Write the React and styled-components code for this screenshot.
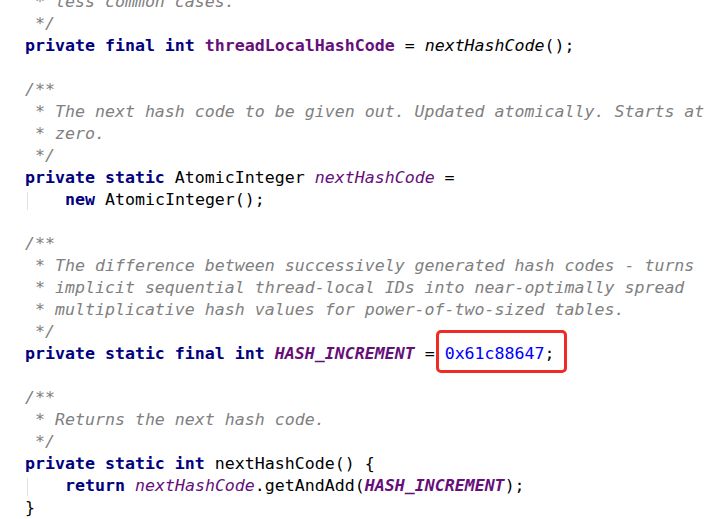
import styled, { createGlobalStyle } from 'styled-components';


const Global = createGlobalStyle`
        html, body {
            margin: 0;
            background: #ffffff;
        }
    `

const Editor = styled.div`
        margin-top: -9px;
        padding-left: 25px;
        font-family: "DejaVu Sans Mono", "Liberation Mono", monospace;
        font-size: 16.6px;
        color: #000000;
        overflow: hidden;
        height: 528px;
    `

const Line = styled.div`
        height: 22px;
        line-height: 22px;
        white-space: pre;
    `

const Guide = styled.span`
        display: inline-block;
        width: 40px;
        height: 18px;
        vertical-align: middle;
        box-sizing: border-box;
        border-left: 1px solid #e3e3e3;
        margin-left: 2px;
        margin-right: -2px;
    `

const Kw = styled.span`
        color: #000080;
        font-weight: bold;
    `

const Field = styled.span`
        color: #660e7a;
        font-weight: ${p => (p.$bold ? 'bold' : 'normal')};
        font-style: ${p => (p.$italic ? 'italic' : 'normal')};
    `

const Call = styled.span`
        font-style: ${p => (p.$italic ? 'italic' : 'normal')};
    `

const Comment = styled.span`
        color: #808080;
        font-style: italic;
    `

const Num = styled.span`
        color: #0000ff;
    `

const Marked = styled.span`
        position: relative;
        &::after {
            content: "";
            position: absolute;
            left: -9px;
            right: -12px;
            top: -14px;
            bottom: -10px;
            border: 3px solid #f02a24;
            border-radius: 5px;
        }
    `

export default function App() {
    return (
        <>
            <Global />
            <Editor>
                <Line><Comment> * less common cases.</Comment></Line>
                <Line><Comment> */</Comment></Line>
                <Line>
                    <Kw>private final int</Kw> <Field $bold>threadLocalHashCode</Field> = <Call $italic>nextHashCode</Call>();
                </Line>
                <Line />
                <Line><Comment>/**</Comment></Line>
                <Line><Comment> * The next hash code to be given out. Updated atomically. Starts at</Comment></Line>
                <Line><Comment> * zero.</Comment></Line>
                <Line><Comment> */</Comment></Line>
                <Line>
                    <Kw>private static</Kw> AtomicInteger <Field $italic>nextHashCode</Field> =
                </Line>
                <Line>
                    <Guide /><Kw>new</Kw> AtomicInteger();
                </Line>
                <Line />
                <Line><Comment>/**</Comment></Line>
                <Line><Comment> * The difference between successively generated hash codes - turns</Comment></Line>
                <Line><Comment> * implicit sequential thread-local IDs into near-optimally spread</Comment></Line>
                <Line><Comment> * multiplicative hash values for power-of-two-sized tables.</Comment></Line>
                <Line><Comment> */</Comment></Line>
                <Line>
                    <Kw>private static final int</Kw> <Field $bold $italic>HASH_INCREMENT</Field> = <Marked><Num>0x61c88647</Num>;</Marked>
                </Line>
                <Line />
                <Line><Comment>/**</Comment></Line>
                <Line><Comment> * Returns the next hash code.</Comment></Line>
                <Line><Comment> */</Comment></Line>
                <Line>
                    <Kw>private static int</Kw> nextHashCode() {"{"}
                </Line>
                <Line>
                    <Guide /><Kw>return</Kw> <Field $italic>nextHashCode</Field>.getAndAdd(<Field $bold $italic>HASH_INCREMENT</Field>);
                </Line>
                <Line>{"}"}</Line>
            </Editor>
        </>
    )
}
